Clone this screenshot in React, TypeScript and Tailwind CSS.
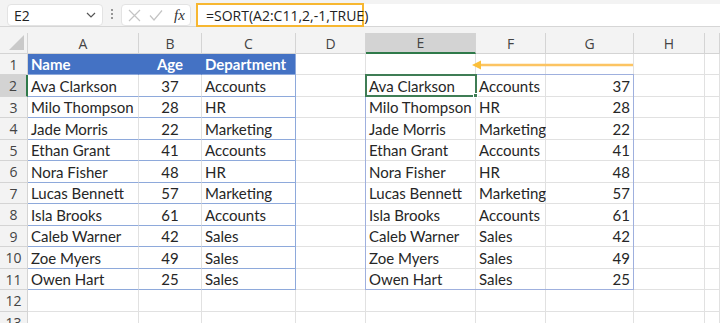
import React from 'react';

type Col = { label: string; w: number };

const cols: Col[] = [
  { label: 'A', w: 111 },
  { label: 'B', w: 63 },
  { label: 'C', w: 94 },
  { label: 'D', w: 70 },
  { label: 'E', w: 110 },
  { label: 'F', w: 70 },
  { label: 'G', w: 88 },
  { label: 'H', w: 71 },
  { label: '', w: 15 },
];

const people = [
  ['Ava Clarkson', '37', 'Accounts'],
  ['Milo Thompson', '28', 'HR'],
  ['Jade Morris', '22', 'Marketing'],
  ['Ethan Grant', '41', 'Accounts'],
  ['Nora Fisher', '48', 'HR'],
  ['Lucas Bennett', '57', 'Marketing'],
  ['Isla Brooks', '61', 'Accounts'],
  ['Caleb Warner', '42', 'Sales'],
  ['Zoe Myers', '49', 'Sales'],
  ['Owen Hart', '25', 'Sales'],
];

const rows = [1, 2, 3, 4, 5, 6, 7, 8, 9, 10, 11, 12, 13];

const cellFont = { fontFamily: 'Lato, "Open Sans", sans-serif' };
const uiFont = { fontFamily: '"Open Sans", "Noto Sans", sans-serif' };

function cellText(row: number, col: number): { text: string; align: string } {
  if (row === 1) {
    if (col === 0) return { text: 'Name', align: 'justify-start' };
    if (col === 1) return { text: 'Age', align: 'justify-center' };
    if (col === 2) return { text: 'Department', align: 'justify-start' };
    return { text: '', align: 'justify-start' };
  }
  if (row >= 2 && row <= 11) {
    const p = people[row - 2];
    if (col === 0) return { text: p[0], align: 'justify-start' };
    if (col === 1) return { text: p[1], align: 'justify-center' };
    if (col === 2) return { text: p[2], align: 'justify-start' };
    if (col === 4) return { text: p[0], align: 'justify-start' };
    if (col === 5) return { text: p[2], align: 'justify-start' };
    if (col === 6) return { text: p[1], align: 'justify-end' };
  }
  return { text: '', align: 'justify-start' };
}

function Cell({ row, col }: { row: number; col: number }) {
  const { text, align } = cellText(row, col);
  const inTable = row >= 1 && row <= 11 && col <= 2;
  let cls = 'flex items-end whitespace-nowrap pb-[2px] px-[3px] border-b border-r text-[15px] leading-none';
  if (row === 1 && col <= 2) {
    cls += ' bg-[#4472c4] text-white font-bold border-b-[#8ea9db]';
    cls += col === 2 ? ' border-r-[#8ea9db]' : ' border-r-[#4472c4]';
  } else if (inTable) {
    cls += ' bg-white text-[#262626] border-b-[#8ea9db]';
    cls += col === 2 ? ' border-r-[#8ea9db]' : ' border-r-[#e1e1e1]';
  } else {
    cls += ' bg-white text-[#262626] border-[#e1e1e1]';
  }
  return (
    <div className={`${cls} ${align}`} style={cellFont}>
      {text}
    </div>
  );
}

function NameBox() {
  return (
    <div className="ml-[7px] mt-[4px] flex h-[22px] w-[96px] items-center justify-between rounded-[4px] border border-[#e3e3e3] bg-white pl-[6px] pr-[6px] text-[14px] text-[#222]">
      <span>E2</span>
      <svg width="10" height="6" viewBox="0 0 10 6" fill="none" stroke="#555" strokeWidth="1.2">
        <path d="M1 1l4 4 4-4" />
      </svg>
    </div>
  );
}

function FxBox() {
  return (
    <div className="mt-[4px] flex h-[22px] w-[70px] items-center rounded-[4px] border border-[#e3e3e3] bg-white pl-[6px]">
      <svg width="13" height="13" viewBox="0 0 13 13" stroke="#c4c4c4" strokeWidth="1.2">
        <path d="M1 1l11 11M12 1L1 12" />
      </svg>
      <svg className="ml-[8px]" width="14" height="11" viewBox="0 0 14 11" fill="none" stroke="#c4c4c4" strokeWidth="1.2">
        <path d="M1 5.5l4 4.5 8-9.5" />
      </svg>
      <span className="ml-[11px] text-[15px] italic text-[#333]" style={{ fontFamily: '"Liberation Serif", serif' }}>
        fx
      </span>
    </div>
  );
}

export default function App() {
  return (
    <div className="flex h-[323px] w-[720px] flex-col overflow-hidden bg-[#f3f3f3]" style={uiFont}>
      {/* formula bar */}
      <div className="flex h-[27px] shrink-0 border-b border-[#d6d6d6]">
        <NameBox />
        <div className="mx-[8px] mt-[9px] flex flex-col gap-[2px]">
          <span className="h-[2px] w-[2px] rounded-full bg-[#777]" />
          <span className="h-[2px] w-[2px] rounded-full bg-[#777]" />
          <span className="h-[2px] w-[2px] rounded-full bg-[#777]" />
        </div>
        <FxBox />
        <div className="ml-[5px] mt-[4px] flex h-[22px] flex-1 bg-white">
          <div className="-mt-[1px] flex h-[24px] w-[168px] items-center border-2 border-[#f7b731] pl-[8px] text-[14px] text-[#222]">
            =SORT(A2:C11,2,-1,TRUE)
          </div>
        </div>
      </div>
      <div className="h-[6px] shrink-0" />

      {/* sheet */}
      <div className="relative shrink-0">
        <div className="grid grid-cols-[28px_111px_63px_94px_70px_110px_70px_88px_71px_15px] grid-rows-[21px_21px_22px_21px_22px_21px_22px_21px_22px_21px_22px_21px_22px_21px]">
          {/* column headers */}
          <div className="relative border-b border-r border-[#d4d4d4]">
            <svg className="absolute bottom-[3px] right-[3px]" width="15" height="15" viewBox="0 0 15 15">
              <path d="M15 0L15 15L0 15Z" fill="#c9c9c9" />
            </svg>
          </div>
          {cols.map((c) => (
            <div
              key={c.label || 'I'}
              className={
                c.label === 'E'
                  ? 'flex items-center justify-center border-b-2 border-r border-b-[#2f7a4a] border-r-[#d4d4d4] bg-[#d3d3d3] text-[14px] text-[#444]'
                  : 'flex items-center justify-center border-b border-r border-[#d4d4d4] text-[14px] text-[#444]'
              }
            >
              {c.label}
            </div>
          ))}

          {rows.map((row) => (
            <React.Fragment key={row}>
              <div
                className={
                  row === 2
                    ? 'flex items-center justify-center border-b border-r-2 border-b-[#d4d4d4] border-r-[#2f7a4a] bg-[#d3d3d3] text-[14px] text-[#444]'
                    : 'flex items-center justify-center border-b border-r border-[#d4d4d4] text-[14px] text-[#444]'
                }
              >
                {row}
              </div>
              {cols.map((c, ci) => (
                <Cell key={ci} row={row} col={ci} />
              ))}
            </React.Fragment>
          ))}
        </div>

        {/* spill range border */}
        <div className="pointer-events-none absolute left-[365px] top-[41px] h-[216px] w-[269px] border border-[#9fb0de]" />
        {/* active cell E2 */}
        <div className="pointer-events-none absolute left-[365px] top-[41px] h-[23px] w-[112px] border-2 border-[#3f7d55]">
          <span className="absolute -bottom-[3px] -right-[3px] h-[5px] w-[5px] border border-white bg-[#3f7d55]" />
        </div>
        {/* arrow */}
        <svg className="pointer-events-none absolute left-[470px] top-[26px]" width="166" height="12" viewBox="0 0 166 12">
          <path d="M9 6H163" stroke="#fcc462" strokeWidth="2.5" />
          <path d="M2 6L11 1.5L11 10.5Z" fill="#fbbf3a" />
        </svg>
      </div>
    </div>
  );
}
